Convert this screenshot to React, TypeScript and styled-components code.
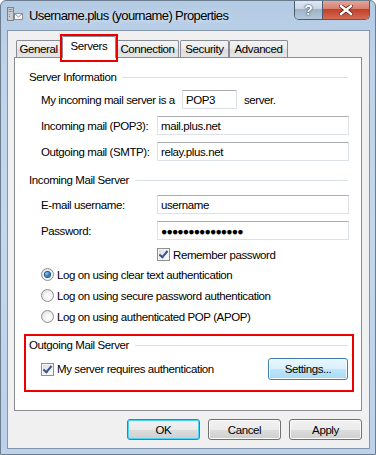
import styled, { createGlobalStyle } from "styled-components";

const GlobalStyle = createGlobalStyle`
  html, body {
    margin: 0;
    padding: 0;
    background: #ffffff;
  }
  body {
    font-family: "Liberation Sans", Arial, sans-serif;
    font-size: 11.5px;
    letter-spacing: -0.4px;
    color: #000000;
  }
  * {
    box-sizing: border-box;
  }
`;

const tabs = [
  { label: "General", width: 45, gap: 0 },
  { label: "Servers", width: 54, gap: 1, active: true },
  { label: "Connection", width: 63, gap: 0 },
  { label: "Security", width: 49, gap: 1 },
  { label: "Advanced", width: 59, gap: 0 },
];

export default function App() {
  return (
    <>
      <GlobalStyle />
      <Window>
        <TitleBar>
          <AppIcon />
          <Title>Username.plus (yourname) Properties</Title>
          <Captions>
            <HelpButton>?</HelpButton>
            <CloseButton>
              <svg width="14" height="10" viewBox="0 0 14 10">
                <path
                  d="M2 1 L12 9 M12 1 L2 9"
                  stroke="#5a2119"
                  strokeWidth="4"
                  strokeLinecap="square"
                />
                <path
                  d="M2 1 L12 9 M12 1 L2 9"
                  stroke="#ffffff"
                  strokeWidth="2.4"
                  strokeLinecap="square"
                />
              </svg>
            </CloseButton>
          </Captions>
        </TitleBar>

        <Client>
          <TabStrip>
            {tabs.map((t) => (
              <Tab key={t.label} $w={t.width} $gap={t.gap} $active={t.active}>
                {t.label}
                {t.active && <Highlight />}
              </Tab>
            ))}
          </TabStrip>

          <Panel>
            <GroupHeader>
              <span>Server Information</span>
            </GroupHeader>
            <InlineRow>
              <span>My incoming mail server is a</span>
              <TextBox $w={55}>POP3</TextBox>
              <span>server.</span>
            </InlineRow>
            <FieldRow>
              <Label>Incoming mail (POP3):</Label>
              <TextBox>mail.plus.net</TextBox>
            </FieldRow>
            <FieldRow>
              <Label>Outgoing mail (SMTP):</Label>
              <TextBox>relay.plus.net</TextBox>
            </FieldRow>

            <GroupHeader $top={12}>
              <span>Incoming Mail Server</span>
            </GroupHeader>
            <FieldRow>
              <Label>E-mail username:</Label>
              <TextBox>username</TextBox>
            </FieldRow>
            <FieldRow>
              <Label>Password:</Label>
              <TextBox>
                <Dots>●●●●●●●●●●●●●●●</Dots>
              </TextBox>
            </FieldRow>
            <CheckRow $indent={128} $top={8}>
              <CheckBox $checked />
              <span>Remember password</span>
            </CheckRow>
            <RadioRow $top={7}>
              <Radio $selected />
              <span>Log on using clear text authentication</span>
            </RadioRow>
            <RadioRow>
              <Radio />
              <span>Log on using secure password authentication</span>
            </RadioRow>
            <RadioRow>
              <Radio />
              <span>Log on using authenticated POP (APOP)</span>
            </RadioRow>

            <RedBox>
              <GroupHeader $top={1}>
                <span>Outgoing Mail Server</span>
              </GroupHeader>
              <AuthRow>
                <CheckLabel>
                  <CheckBox $checked />
                  <span>My server requires authentication</span>
                </CheckLabel>
                <PushButton $w={80} $h={22} $hot>
                  Settings...
                </PushButton>
              </AuthRow>
            </RedBox>
          </Panel>

          <ButtonBar>
            <PushButton $default>OK</PushButton>
            <PushButton>Cancel</PushButton>
            <PushButton>Apply</PushButton>
          </ButtonBar>
        </Client>
      </Window>
    </>
  );
}

function AppIcon() {
  return (
    <IconBox>
      <svg width="16" height="15" viewBox="0 0 16 15">
        <rect x="0.5" y="0.5" width="6" height="13" fill="#c9ccd0" stroke="#7d8288" />
        <rect x="1.5" y="2" width="4" height="1" fill="#8a9097" />
        <rect x="1.5" y="4" width="4" height="1" fill="#8a9097" />
        <rect x="2" y="7" width="1" height="1" fill="#4fb84a" />
        <rect x="2" y="9" width="1" height="1" fill="#4fb84a" />
        <rect x="7.5" y="6.5" width="8" height="6" fill="#f7f7f7" stroke="#8c9096" />
        <path d="M7.5 6.5 L11.5 10 L15.5 6.5" fill="none" stroke="#8c9096" />
      </svg>
    </IconBox>
  );
}

const Window = styled.div`
  width: 376px;
  height: 455px;
  display: flex;
  flex-direction: column;
  border: 1px solid #6c7d8f;
  border-radius: 6px 6px 0 0;
  overflow: hidden;
  background: linear-gradient(
    to bottom,
    #b3cae3 0%,
    #bed3ea 12%,
    #c4d7ec 50%,
    #bcd2ea 100%
  );
`;

const TitleBar = styled.div`
  height: 29px;
  display: flex;
  align-items: flex-start;
`;

const IconBox = styled.div`
  width: 16px;
  height: 15px;
  margin: 6px 0 0 6px;
  display: flex;
`;

const Title = styled.div`
  margin: 6px 0 0 6px;
  font-size: 13px;
  letter-spacing: -0.6px;
  line-height: 17px;
  color: #000000;
  text-shadow: 0 0 6px rgba(255, 255, 255, 0.8);
  white-space: nowrap;
`;

const Captions = styled.div`
  margin: -1px 5px 0 auto;
  display: flex;
  border: 1px solid #4d5d70;
  border-top: none;
  border-radius: 0 0 5px 5px;
  overflow: hidden;
`;

const HelpButton = styled.div`
  width: 28px;
  height: 19px;
  display: flex;
  align-items: center;
  justify-content: center;
  font-weight: bold;
  font-size: 14px;
  letter-spacing: 0;
  color: #ffffff;
  text-shadow: 0 0 1px #2b3a4b, 0 0 2px #2b3a4b;
  border-right: 1px solid #4d5d70;
  background: linear-gradient(
    to bottom,
    #e4ecf4 0%,
    #c8d6e5 45%,
    #9eb3c9 50%,
    #b6c8da 100%
  );
`;

const CloseButton = styled.div`
  width: 46px;
  height: 19px;
  display: flex;
  align-items: center;
  justify-content: center;
  background: linear-gradient(
    to bottom,
    #e9a99d 0%,
    #d7806f 45%,
    #c2412b 50%,
    #d56a52 100%
  );
`;

const Client = styled.div`
  flex: 1;
  margin: 0 5px 5px 6px;
  padding: 0 7px 8px 6px;
  display: flex;
  flex-direction: column;
  background: #f0f0f0;
  border: 1px solid #8496aa;
`;

const TabStrip = styled.div`
  height: 26px;
  padding-left: 2px;
  display: flex;
  align-items: flex-end;
`;

const Tab = styled.div<{ $w: number; $gap: number; $active?: boolean }>`
  position: relative;
  width: ${(p) => p.$w}px;
  height: ${(p) => (p.$active ? 22 : 17)}px;
  margin-left: ${(p) => p.$gap}px;
  margin-bottom: ${(p) => (p.$active ? -1 : 0)}px;
  z-index: ${(p) => (p.$active ? 1 : 0)};
  display: flex;
  align-items: ${(p) => (p.$active ? "flex-start" : "center")};
  justify-content: center;
  padding-top: ${(p) => (p.$active ? 2 : 0)}px;
  line-height: 15px;
  border: 1px solid #898c95;
  border-bottom: none;
  border-radius: 2px 2px 0 0;
  background: ${(p) =>
    p.$active
      ? "#ffffff"
      : "linear-gradient(to bottom, #f3f3f3 0%, #ebebeb 50%, #dedede 51%, #e5e5e5 100%)"};
`;

const Highlight = styled.div`
  position: absolute;
  left: -3px;
  right: -3px;
  top: -3px;
  bottom: -4px;
  border: 2px solid #ee0000;
`;

const Panel = styled.div`
  flex: 1;
  display: flex;
  flex-direction: column;
  padding: 12px 12px 0 14px;
  background: #ffffff;
  border: 1px solid #898c95;
`;

const GroupHeader = styled.div<{ $top?: number }>`
  height: 15px;
  margin-top: ${(p) => p.$top ?? 0}px;
  display: flex;
  align-items: center;
  gap: 6px;
  line-height: 15px;
  white-space: nowrap;

  &::after {
    content: "";
    flex: 1;
    margin-right: 1px;
    border-top: 1px solid #d5dfe5;
  }
`;

const InlineRow = styled.div`
  height: 19px;
  margin: 5px 0 0 12px;
  display: flex;
  align-items: center;
  gap: 7px;
  white-space: nowrap;
`;

const FieldRow = styled.div`
  height: 19px;
  margin: 7px 0 0 12px;
  display: flex;
  align-items: center;
`;

const Label = styled.div`
  width: 116px;
  white-space: nowrap;
`;

const TextBox = styled.div<{ $w?: number }>`
  width: ${(p) => (p.$w ? `${p.$w}px` : "auto")};
  flex: ${(p) => (p.$w ? "none" : "1")};
  height: 19px;
  padding: 0 3px;
  display: flex;
  align-items: center;
  background: #ffffff;
  border: 1px solid #dde2e8;
  border-top-color: #abadb3;
  white-space: nowrap;
`;

const Dots = styled.span`
  font-size: 10.5px;
  letter-spacing: -0.9px;
`;

const CheckRow = styled.div<{ $indent?: number; $top?: number }>`
  height: 13px;
  margin: ${(p) => p.$top ?? 0}px 0 0 ${(p) => p.$indent ?? 12}px;
  display: flex;
  align-items: center;
  gap: 3px;
  white-space: nowrap;
`;

const RadioRow = styled(CheckRow)`
  margin-top: ${(p) => p.$top ?? 8}px;
`;

const CheckBox = styled.span<{ $checked?: boolean }>`
  position: relative;
  width: 13px;
  height: 13px;
  flex: none;
  border: 1px solid #8e8f8f;
  background: linear-gradient(135deg, #dcdcdc 0%, #f0f0f0 60%, #ffffff 100%);
  box-shadow: inset 0 0 0 1px #f4f4f4;

  &::after {
    content: "";
    display: ${(p) => (p.$checked ? "block" : "none")};
    position: absolute;
    left: 3px;
    top: 0px;
    width: 3px;
    height: 7px;
    border: solid #3b538a;
    border-width: 0 2px 2px 0;
    transform: rotate(40deg);
  }
`;

const Radio = styled.span<{ $selected?: boolean }>`
  width: 13px;
  height: 13px;
  flex: none;
  border-radius: 50%;
  border: 1px solid #8e8f8f;
  display: flex;
  align-items: center;
  justify-content: center;
  background: radial-gradient(circle at 60% 60%, #ffffff 0%, #f2f2f2 45%, #d2d2d2 100%);

  &::after {
    content: "";
    display: ${(p) => (p.$selected ? "block" : "none")};
    width: 5px;
    height: 5px;
    border-radius: 50%;
    background: radial-gradient(circle at 35% 35%, #8fd0ff 0%, #2a78c0 50%, #0b3f78 100%);
    box-shadow: 0 0 0 1px #1c5180;
  }
`;

const RedBox = styled.div`
  margin: 11px -5px 0 -5px;
  padding: 1px 3px 10px 3px;
  border: 2px solid #ee0000;
`;

const AuthRow = styled.div`
  height: 22px;
  margin: 5px 1px 0 12px;
  display: flex;
  align-items: center;
  justify-content: space-between;
`;

const CheckLabel = styled.div`
  display: flex;
  align-items: center;
  gap: 3px;
  white-space: nowrap;
`;

const ButtonBar = styled.div`
  margin-top: 8px;
  display: flex;
  justify-content: flex-end;
  gap: 8px;
`;

const PushButton = styled.div<{ $w?: number; $h?: number; $default?: boolean; $hot?: boolean }>`
  width: ${(p) => p.$w ?? 73}px;
  height: ${(p) => p.$h ?? 21}px;
  display: flex;
  align-items: center;
  justify-content: center;
  border-radius: 3px;
  border: 1px solid ${(p) => (p.$default || p.$hot ? "#3c7fb1" : "#707070")};
  box-shadow: inset 0 0 0 1px ${(p) => (p.$default ? "#48d4f7" : "#fbfbfb")};
  background: ${(p) =>
    p.$hot
      ? "linear-gradient(to bottom, #eaf6fd 0%, #d9f0fc 50%, #bee6fd 51%, #a7d9f5 100%)"
      : "linear-gradient(to bottom, #f2f2f2 0%, #ebebeb 50%, #dddddd 51%, #cfcfcf 100%)"};
  white-space: nowrap;
`;
